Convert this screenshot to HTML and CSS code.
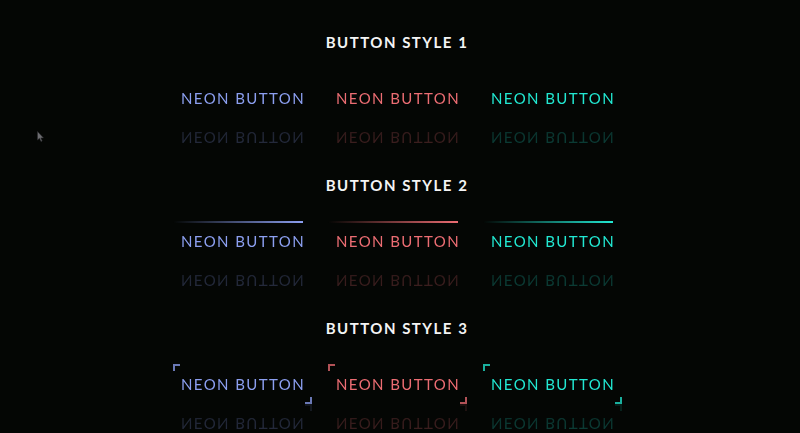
FILE: index.html
```html
<!DOCTYPE html>
<html lang="en">
<head>
<meta charset="utf-8">
<title>Neon Buttons</title>
<link rel="stylesheet" href="styles.css">
</head>
<body>
<main class="page">
  <section class="group">
    <h2 class="title">BUTTON STYLE 1</h2>
    <div class="row">
      <button class="btn btn-blue">NEON BUTTON</button>
      <button class="btn btn-red">NEON BUTTON</button>
      <button class="btn btn-cyan">NEON BUTTON</button>
    </div>
  </section>
  <section class="group style2">
    <h2 class="title">BUTTON STYLE 2</h2>
    <div class="row">
      <button class="btn btn-blue">NEON BUTTON</button>
      <button class="btn btn-red">NEON BUTTON</button>
      <button class="btn btn-cyan">NEON BUTTON</button>
    </div>
  </section>
  <section class="group style3">
    <h2 class="title">BUTTON STYLE 3</h2>
    <div class="row">
      <button class="btn btn-blue"><span class="corner tl"></span>NEON BUTTON<span class="corner br"></span></button>
      <button class="btn btn-red"><span class="corner tl"></span>NEON BUTTON<span class="corner br"></span></button>
      <button class="btn btn-cyan"><span class="corner tl"></span>NEON BUTTON<span class="corner br"></span></button>
    </div>
  </section>
</main>
<svg class="cursor" width="8" height="12" viewBox="0 0 8 12"><path d="M0.5 0.5 L0.5 9 L2.5 7.3 L4 10.5 L5.2 10 L3.8 6.9 L6.5 6.9 Z" fill="#6e6e72" stroke="#2a2a2e" stroke-width="0.6"/></svg>
</body>
</html>
```
FILE: styles.css
```css
html, body {
  margin: 0;
  padding: 0;
  background: #040604;
  height: 100%;
  overflow: hidden;
}
body {
  font-family: "Lato", "Noto Sans", sans-serif;
  position: relative;
}
.page {
  display: flex;
  flex-direction: column;
  align-items: center;
  padding: 30px 6px 0 0;
}
.group {
  display: flex;
  flex-direction: column;
  align-items: center;
  height: 143px;
}
.title {
  margin: 0 0 24px 0;
  height: 24px;
  line-height: 24px;
  font-size: 15px;
  font-weight: 700;
  letter-spacing: 1.5px;
  white-space: nowrap;
  color: #f4f4f4;
}
.row {
  display: flex;
  gap: 16px;
}
.btn {
  position: relative;
  width: 139px;
  height: 40px;
  padding: 0 0 0 2px;
  border: 0;
  background: transparent;
  font-family: inherit;
  font-size: 15px;
  font-weight: 400;
  letter-spacing: 1.4px;
  white-space: nowrap;
  cursor: pointer;
  -webkit-box-reflect: below 0 linear-gradient(transparent 12%, rgba(0, 0, 0, 0.24) 35%, rgba(0, 0, 0, 0.14) 100%);
}
.btn-blue { color: #8c9ff0; }
.btn-red { color: #ec6d73; }
.btn-cyan { color: #22e8d2; }

.style2 .btn::before {
  content: "";
  position: absolute;
  left: 0;
  right: 9px;
  top: 0;
  height: 2px;
  background: linear-gradient(to right, transparent, currentColor);
}

.corner {
  position: absolute;
  width: 5px;
  height: 5px;
  border-color: currentColor;
  border-style: solid;
  opacity: 0.75;
}
.corner.tl {
  left: 0;
  top: 0;
  border-width: 2px 0 0 2px;
}
.corner.br {
  right: 0;
  bottom: 0;
  border-width: 0 2px 2px 0;
}

.cursor {
  position: absolute;
  left: 37px;
  top: 131px;
}
```
